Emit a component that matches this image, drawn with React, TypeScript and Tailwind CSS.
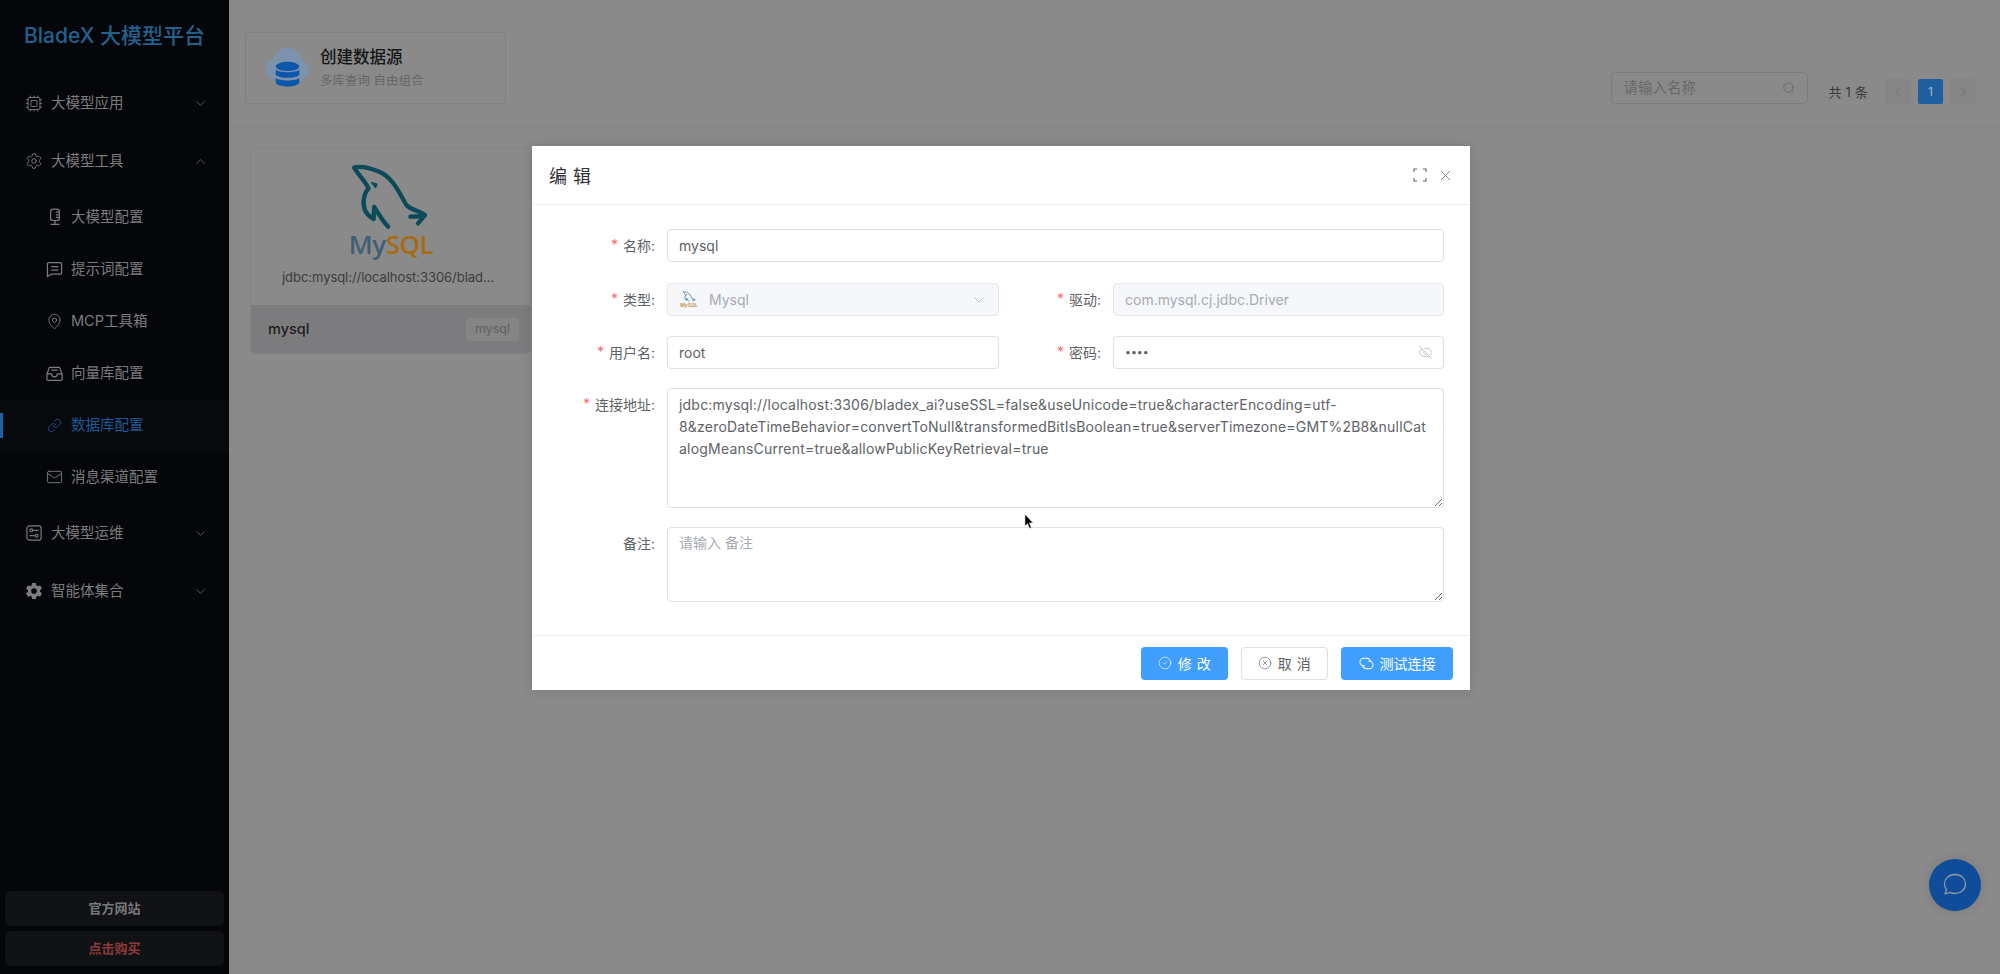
import React from "react";
import { Cpu, Settings, MapPin, Link as LinkIcon, Mail, ChevronDown, ChevronUp, ChevronLeft, ChevronRight, Search, X, CircleCheck, CircleX, EyeOff } from "lucide-react";
import { IoSettingsSharp } from "react-icons/io5";

const FONT = "[font-family:Inter,'Noto_Sans_CJK_SC',sans-serif]";

function Dolphin({ className, stroke = "#0b4a58" }: { className?: string; stroke?: string }) {
  return (
    <svg viewBox="350 455 245 205" className={className} fill="none" stroke={stroke} strokeWidth="13" strokeLinecap="round" strokeLinejoin="round">
      <path d="M368 472 C388 466 420 475 445 485 C480 500 500 540 525 585 C540 600 570 605 581 615 L560 640 M581 615 C565 622 550 618 537 620" />
      <path d="M368 472 C376 490 400 510 411 535 C396 550 392 580 400 600 C408 618 418 622 426 627 L428 590 C440 610 455 635 470 650" />
      <path d="M420 517 L436 522 L432 532 Z" strokeWidth="4" fill={stroke} />
    </svg>
  );
}

function MicIcon() {
  return (
    <svg viewBox="0 0 16 20" className="w-[14px] h-[18px]" fill="none" stroke="currentColor" strokeWidth="1.4">
      <rect x="3" y="1" width="10" height="13" rx="3" />
      <path d="M8 14v4M3 18.5h10M9 4.5h4M9 7.5h4M9 10.5h4" />
    </svg>
  );
}
function ChatIcon() {
  return (
    <svg viewBox="0 0 18 18" className="w-[17px] h-[17px]" fill="none" stroke="currentColor" strokeWidth="1.3" strokeLinejoin="round">
      <path d="M1.5 3.2 a1.5 1.5 0 0 1 1.5-1.5 h12 a1.5 1.5 0 0 1 1.5 1.5 v9.3 a1.5 1.5 0 0 1-1.5 1.5 H5.5 L1.5 16.5 Z" />
      <path d="M5.5 6h7.5M5.5 9.7h7.5" />
    </svg>
  );
}
function BoxIcon() {
  return (
    <svg viewBox="0 0 18 18" className="w-[17px] h-[17px]" fill="none" stroke="currentColor" strokeWidth="1.3" strokeLinejoin="round">
      <path d="M1 9.5 L3.6 2.5 h10.8 L17 9.5 v5.5 a1.2 1.2 0 0 1-1.2 1.2 H2.2 A1.2 1.2 0 0 1 1 15 Z" />
      <path d="M1 9.5 h5 a3 3 0 0 0 6 0 h5M5.5 5.5 h7" />
    </svg>
  );
}
function OpsIcon() {
  return (
    <svg viewBox="0 0 18 18" className="w-[16px] h-[16px]" fill="none" stroke="currentColor" strokeWidth="1.3">
      <rect x="1" y="1" width="16" height="16" rx="2.5" />
      <circle cx="6" cy="6" r="1.6" />
      <circle cx="12" cy="12" r="1.6" />
      <path d="M8 6h6M4 12h6" />
    </svg>
  );
}
function FullIcon() {
  return (
    <svg viewBox="0 0 14 14" className="w-[14px] h-[14px]" fill="none" stroke="#606266" strokeWidth="1.1">
      <path d="M1 4V1h3M10 1h3v3M13 10v3h-3M4 13H1v-3" />
    </svg>
  );
}
function LinkedIcon() {
  return (
    <svg viewBox="0 0 16 16" className="w-[15px] h-[15px]" fill="none" stroke="currentColor" strokeWidth="1.1">
      <path d="M6 10.5 H5 A4 4 0 0 1 5 2.5 H8 A4 4 0 0 1 12 5.5" />
      <path d="M10 5.5 H11 A4 4 0 0 1 11 13.5 H8 A4 4 0 0 1 4 10.5" />
    </svg>
  );
}
function CloudDb() {
  return (
    <svg viewBox="0 0 42 39" className="w-[43px] h-[40px]">
      <path d="M10 31 C3 31 0 26 0 21 C0 16 3 13 7 12 C8 5 14 0 21 0 C28 0 34 5 35 12 C39 13 42 16 42 21 C42 26 39 31 32 31 Z" fill="#7c93ad" />
      <ellipse cx="21" cy="18" rx="11.5" ry="4.5" fill="#0d57ab" />
      <path d="M9.5 21 C12 24.5 30 24.5 32.5 21 V26 C30 30 12 30 9.5 26 Z" fill="#0d57ab" />
      <path d="M9.5 29 C12 32.5 30 32.5 32.5 29 V34 C30 39 12 39 9.5 34 Z" fill="#0d57ab" />
    </svg>
  );
}

function TopRow({ icon, label, open }: { icon: React.ReactNode; label: string; open?: boolean }) {
  return (
    <div className="h-[52px] flex items-center pl-[25px] pr-[21px] text-[#7b7c7e]">
      <span className="w-[18px] flex justify-center">{icon}</span>
      <span className="ml-[8px] flex-1 text-[14.5px]">{label}</span>
      {open ? <ChevronUp size={15} strokeWidth={1.1} /> : <ChevronDown size={15} strokeWidth={1.1} />}
    </div>
  );
}
function SubRow({ icon, label, active }: { icon: React.ReactNode; label: string; active?: boolean }) {
  return (
    <div className={`relative h-[52px] flex items-center pl-[46px] ${active ? "bg-[#07090d] text-[#1c5a96]" : "text-[#7b7c7e]"}`}>
      {active && <span className="absolute left-0 top-[14px] w-[3px] h-[25px] bg-[#1e5fa8]" />}
      <span className="w-[17px] flex justify-center">{icon}</span>
      <span className="ml-[8px] text-[14.5px]">{label}</span>
    </div>
  );
}

function Label({ text, required }: { text: string; required?: boolean }) {
  return (
    <label className="w-[97px] mr-[12px] shrink-0 h-[33px] flex items-center justify-end text-[14px] text-[#606266]">
      {required && <span className="text-[#f56c6c] mr-[5px] text-[14px] relative top-[-1px]">*</span>}
      {text}:
    </label>
  );
}

const inputCls = "w-full h-[33px] rounded-[4px] border border-[#dcdfe6] px-[11px] text-[14px] text-[#606266] outline-none bg-white";
const passwordCls = "w-full h-[33px] rounded-[4px] border border-[#dcdfe6] px-[11px] text-[10.5px] text-[#606266] outline-none bg-white";
const disabledCls = "w-full h-[33px] rounded-[4px] border border-[#e4e7ed] px-[11px] text-[14px] text-[#a8abb2] outline-none bg-[#f5f7fa]";

const URL_TEXT =
  "jdbc:mysql://localhost:3306/bladex_ai?useSSL=false&useUnicode=true&characterEncoding=utf-\n8&zeroDateTimeBehavior=convertToNull&transformedBitIsBoolean=true&serverTimezone=GMT%2B8&nullCat\nalogMeansCurrent=true&allowPublicKeyRetrieval=true";

export default function App() {
  return (
    <div className={`relative flex h-[974px] w-[2000px] overflow-hidden bg-[#8a8a8a] ${FONT}`}>
      {/* sidebar */}
      <aside className="w-[229px] shrink-0 h-full bg-[#050609] flex flex-col">
        <div className="h-[72px] flex items-center pl-[24px] text-[21px] text-[#23618f] font-medium">BladeX 大模型平台</div>
        <div className="mt-[5px] flex flex-col gap-[6px]">
          <TopRow icon={<Cpu size={19} strokeWidth={1.25} />} label="大模型应用" />
          <div className="mb-[-2px]">
            <TopRow icon={<Settings size={18} strokeWidth={1.25} />} label="大模型工具" open />
            <div className="mt-[4px]">
              <SubRow icon={<MicIcon />} label="大模型配置" />
              <SubRow icon={<ChatIcon />} label="提示词配置" />
              <SubRow icon={<MapPin size={17} strokeWidth={1.3} />} label="MCP工具箱" />
              <SubRow icon={<BoxIcon />} label="向量库配置" />
              <SubRow icon={<LinkIcon size={15} strokeWidth={1.4} />} label="数据库配置" active />
              <SubRow icon={<Mail size={18} strokeWidth={1.3} />} label="消息渠道配置" />
            </div>
          </div>
          <TopRow icon={<OpsIcon />} label="大模型运维" />
          <TopRow icon={<IoSettingsSharp size={18} />} label="智能体集合" />
        </div>
        <div className="mt-auto px-[5px] pb-[8px] flex flex-col gap-[5px]">
          <div className="h-[35px] rounded-[6px] bg-[#111215] flex items-center justify-center text-[13px] font-bold text-[#77787a]">官方网站</div>
          <div className="h-[35px] rounded-[6px] bg-[#111215] flex items-center justify-center text-[13px] font-bold text-[#8b3a3a]">点击购买</div>
        </div>
      </aside>

      {/* main */}
      <main className="flex-1 min-w-0 flex flex-col">
        <div className="h-[127px] shrink-0 border-b border-[#838383] flex pl-[16px] pr-[24px]">
          <div className="mt-[32px] w-[261px] h-[72px] border border-[#7f7f7f] rounded-[2px] flex items-center pl-[20px]">
            <CloudDb />
            <div className="ml-[11px]">
              <div className="text-[16.5px] font-medium text-[#151515] leading-[22px]">创建数据源</div>
              <div className="text-[12.5px] text-[#666666] leading-[18px] mt-[4px]">多库查询 自由组合</div>
            </div>
          </div>
          <div className="ml-auto flex items-start">
            <div className="mt-[72px] w-[197px] h-[32px] border border-[#7c7c7c] rounded-[4px] flex items-center pl-[11px] pr-[11px] text-[14.5px] text-[#676767]">
              <span className="flex-1">请输入名称</span>
              <Search size={14} strokeWidth={1.3} className="text-[#5f5f5f]" />
            </div>
            <div className="ml-[20px] mt-[82px] text-[13px] text-[#3a3a3a] leading-[20px] tracking-[0.2px]">共 1 条</div>
            <div className="ml-[17px] mt-[79px] flex gap-[8px]">
              <div className="w-[25px] h-[25px] rounded-[2px] bg-[#858585] flex items-center justify-center text-[#6a6a6a]"><ChevronLeft size={13} strokeWidth={1.3} /></div>
              <div className="w-[25px] h-[25px] rounded-[2px] bg-[#1f5f9f] flex items-center justify-center text-[12px] text-[#a8b8c8]">1</div>
              <div className="w-[25px] h-[25px] rounded-[2px] bg-[#858585] flex items-center justify-center text-[#6a6a6a]"><ChevronRight size={13} strokeWidth={1.3} /></div>
            </div>
          </div>
        </div>

        <div className="pl-[21px] pt-[20px]">
          <div className="w-[282px] h-[207px] rounded-[6px] border border-[#838383] overflow-hidden flex flex-col">
            <div className="flex-1 flex flex-col items-center">
              <Dolphin className="w-[82px] h-[68px] mt-[14px] ml-[-5px]" />
              <div className="text-[26px] leading-[30px] mt-[-1px] [font-family:'Open_Sans',sans-serif] font-semibold tracking-[-0.5px]">
                <span className="text-[#3f5f75]">My</span>
                <span className="text-[#a86a10]">SQL</span>
              </div>
              <div className="text-[13px] text-[#3c3c3c] mt-[9px] w-[218px] tracking-[-0.05px] truncate text-center">jdbc:mysql://localhost:3306/bladex_ai</div>
            </div>
            <div className="h-[48px] bg-[#7c7c7e] flex items-center justify-between pl-[17px] pr-[12px]">
              <span className="text-[14.5px] font-medium text-[#1c1c1c]">mysql</span>
              <span className="w-[53px] h-[23px] rounded-[3px] bg-[#858585] text-[12.5px] text-[#5f5f5f] flex items-center justify-center">mysql</span>
            </div>
          </div>
        </div>
      </main>

      {/* chat bubble */}
      <div className="absolute left-[1929px] top-[859px] w-[52px] h-[52px] rounded-full bg-[#0f4c99] shadow-[0_0_12px_rgba(0,0,0,0.12)] flex items-center justify-center text-[#8f9aa8]">
        <svg viewBox="0 0 24 24" className="w-[24px] h-[24px]" fill="none" stroke="currentColor" strokeWidth="1.3" strokeLinejoin="round">
          <path d="M12 1.5 C18.5 1.5 22.5 6 22.5 11 C22.5 16.5 18 20.5 12 20.5 C10 20.5 8.5 20 7 19.3 L2 21 L3.6 16.8 C2.2 15.2 1.5 13.2 1.5 11 C1.5 6 5.5 1.5 12 1.5 Z" />
        </svg>
      </div>

      {/* dialog */}
      <div className="absolute left-[532px] top-[146px] w-[938px] h-[544px] bg-white shadow-[0_0_12px_rgba(0,0,0,0.12)] flex flex-col">
        <div className="h-[59px] shrink-0 border-b border-[#f0f0f0] flex items-center pl-[17px] pr-[16px]">
          <span className="flex-1 text-[18px] text-[#303133] mt-[3px] tracking-[0.5px]">编 辑</span>
          <FullIcon />
          <X size={17} strokeWidth={1.1} className="ml-[10px] text-[#606266]" />
        </div>

        <div className="flex-1 pt-[24px] pl-[26px] pr-[26px]">
          <div className="flex mb-[21px]">
            <Label text="名称" required />
            <input className={inputCls} value="mysql" readOnly />
          </div>

          <div className="grid grid-cols-[441px_440px] gap-x-[5px] mb-[20px]">
            <div className="flex">
              <Label text="类型" required />
              <div className={`${disabledCls} flex items-center`}>
                <span className="w-[20px] flex flex-col items-center mr-[10px]">
                  <Dolphin className="w-[14px] h-[11px]" stroke="#2d6f80" />
                  <span className="text-[5px] leading-[6px] text-[#c08a45] font-semibold">MySQL</span>
                </span>
                <span className="flex-1">Mysql</span>
                <ChevronDown size={16} strokeWidth={1.1} className="text-[#a8abb2]" />
              </div>
            </div>
            <div className="flex">
              <Label text="驱动" required />
              <input className={disabledCls} value="com.mysql.cj.jdbc.Driver" disabled />
            </div>
          </div>

          <div className="grid grid-cols-[441px_440px] gap-x-[5px] mb-[19px]">
            <div className="flex">
              <Label text="用户名" required />
              <input className={inputCls} value="root" readOnly />
            </div>
            <div className="flex">
              <Label text="密码" required />
              <div className="relative w-full">
                <input className={passwordCls} type="password" value="root" readOnly />
                <EyeOff size={15} strokeWidth={1.1} className="absolute right-[11px] top-[9px] text-[#a8abb2]" />
              </div>
            </div>
          </div>

          <div className="flex mb-[19px]">
            <Label text="连接地址" required />
            <textarea
              className="w-full h-[120px] rounded-[4px] border border-[#dcdfe6] px-[11px] pt-[5px] text-[14px] leading-[22px] tracking-[0.2px] text-[#606266] outline-none whitespace-pre overflow-hidden bg-white block"
              value={URL_TEXT}
              readOnly
            />
          </div>

          <div className="flex">
            <Label text="备注" />
            <textarea
              className="w-full h-[75px] rounded-[4px] border border-[#dcdfe6] px-[11px] pt-[4px] text-[14px] leading-[22px] text-[#606266] outline-none placeholder:text-[#a8abb2] bg-white block"
              placeholder="请输入 备注"
              readOnly
            />
          </div>
        </div>

        <div className="h-[55px] shrink-0 border-t border-[#f0f0f0] flex items-center justify-end pr-[17px] gap-[13px]">
          <button className="w-[87px] h-[33px] rounded-[4px] bg-[#409eff] text-white text-[14px] flex items-center justify-center gap-[6px] tracking-[0.5px]">
            <CircleCheck size={14} strokeWidth={1.1} />修 改
          </button>
          <button className="w-[87px] h-[33px] rounded-[4px] bg-white border border-[#dcdfe6] text-[#606266] text-[14px] flex items-center justify-center gap-[6px] tracking-[0.5px]">
            <CircleX size={14} strokeWidth={1.1} />取 消
          </button>
          <button className="w-[112px] h-[33px] rounded-[4px] bg-[#409eff] text-white text-[14px] flex items-center justify-center gap-[6px]">
            <LinkedIcon />测试连接
          </button>
        </div>
      </div>

      {/* mouse pointer */}
      <svg viewBox="0 0 12 18" className="absolute left-[1024px] top-[513px] w-[11px] h-[17px]">
        <path d="M1 1 L1 14 L4 11.5 L6 16.5 L8 15.5 L6 10.5 L10 10.5 Z" fill="#000" stroke="#fff" strokeWidth="0.6" />
      </svg>
    </div>
  );
}
